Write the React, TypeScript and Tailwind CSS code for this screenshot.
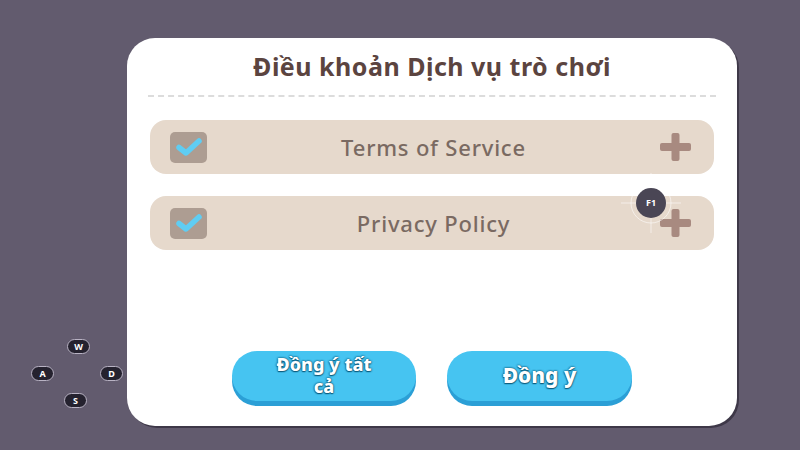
type Row = { label: string };

const rows: Row[] = [{ label: "Terms of Service" }, { label: "Privacy Policy" }];

function CheckBox() {
  return (
    <div className="flex h-[31px] w-[37px] items-center justify-center rounded-[5px] bg-[#ad9d92]">
      <svg width="30" height="24" viewBox="0 0 30 24" fill="none">
        <path d="M5 12.5 L12 18 L25 6" stroke="#5fcdf3" strokeWidth="5.5" strokeLinecap="round" strokeLinejoin="round" />
      </svg>
    </div>
  );
}

function PlusMark() {
  return (
    <svg width="31" height="28" viewBox="0 0 31 28">
      <rect x="11.5" y="0" width="8" height="28" rx="2" fill="#a88a80" />
      <rect x="0" y="10" width="31" height="8" rx="2" fill="#a88a80" />
    </svg>
  );
}

function KeyPill({ label, className }: { label: string; className: string }) {
  return (
    <div
      className={`absolute flex h-[15px] w-[23px] items-center justify-center rounded-full border border-[#b9b3c4] bg-[#25222f] text-[9px] font-bold text-white ${className}`}
    >
      {label}
    </div>
  );
}

function App() {
  return (
    <div className="relative h-[450px] w-[800px] overflow-hidden bg-[#625b6e] font-['Noto_Sans','DejaVu_Sans',sans-serif]">
      <div className="ml-[127px] pt-[38px]">
        <section className="flex h-[388px] w-[610px] flex-col rounded-[28px] bg-white shadow-[2px_2px_0_#3e3848]">
          <h1 className="pt-[11px] text-center text-[25px] font-bold leading-[34px] tracking-[0.5px] text-[#5b4440]">
            Điều khoản Dịch vụ trò chơi
          </h1>
          <div className="mx-[21px] mt-[12px] border-t-2 border-dashed border-[#dcdcdc]" />

          <div className="mt-[23px] flex flex-col gap-[22px] px-[23px]">
            {rows.map((row) => (
              <div
                key={row.label}
                className="flex h-[54px] items-center rounded-[16px] bg-[#e6d9cc] pl-[20px] pr-[23px]"
              >
                <CheckBox />
                <span className="flex-1 text-center text-[22px] font-medium tracking-[0.8px] text-[#7a6a62]">
                  {row.label}
                </span>
                <PlusMark />
              </div>
            ))}
          </div>

          <div className="mt-auto flex justify-center gap-[31px] pb-[25px]">
            <button className="flex h-[50px] w-[184px] flex-col items-center justify-center rounded-full bg-[#46c4f1] pb-[2px] text-[18px] font-extrabold leading-[22px] text-white shadow-[0_5px_0_#2b9fd6] [text-shadow:0_0_2px_#0d5b7c,0_0_2px_#0d5b7c,0_1px_1px_#0d5b7c]">
              <span>Đồng ý tất</span>
              <span>cả</span>
            </button>
            <button className="flex h-[50px] w-[185px] items-center justify-center rounded-full bg-[#46c4f1] text-[21px] font-extrabold text-white shadow-[0_5px_0_#2b9fd6] [text-shadow:0_0_2px_#0d5b7c,0_0_2px_#0d5b7c,0_1px_1px_#0d5b7c]">
              Đồng ý
            </button>
          </div>
        </section>
      </div>

      <KeyPill label="W" className="left-[67px] top-[339px]" />
      <KeyPill label="A" className="left-[31px] top-[366px]" />
      <KeyPill label="D" className="left-[100px] top-[366px]" />
      <KeyPill label="S" className="left-[64px] top-[393px]" />

      <div className="absolute left-[621px] top-[173px] h-[60px] w-[60px]">
        <svg width="60" height="60" viewBox="0 0 60 60" className="absolute inset-0">
          <circle cx="30" cy="30" r="20" fill="none" stroke="#ffffff" strokeOpacity="0.55" strokeWidth="1" />
          <line x1="0" y1="30" x2="60" y2="30" stroke="#ffffff" strokeOpacity="0.55" strokeWidth="1" />
          <line x1="30" y1="0" x2="30" y2="60" stroke="#ffffff" strokeOpacity="0.55" strokeWidth="1" />
        </svg>
        <div className="absolute left-[15px] top-[15px] flex h-[30px] w-[30px] items-center justify-center rounded-full bg-[#4a4655] text-[9px] font-bold text-white">
          F1
        </div>
      </div>
    </div>
  );
}

export default App;
